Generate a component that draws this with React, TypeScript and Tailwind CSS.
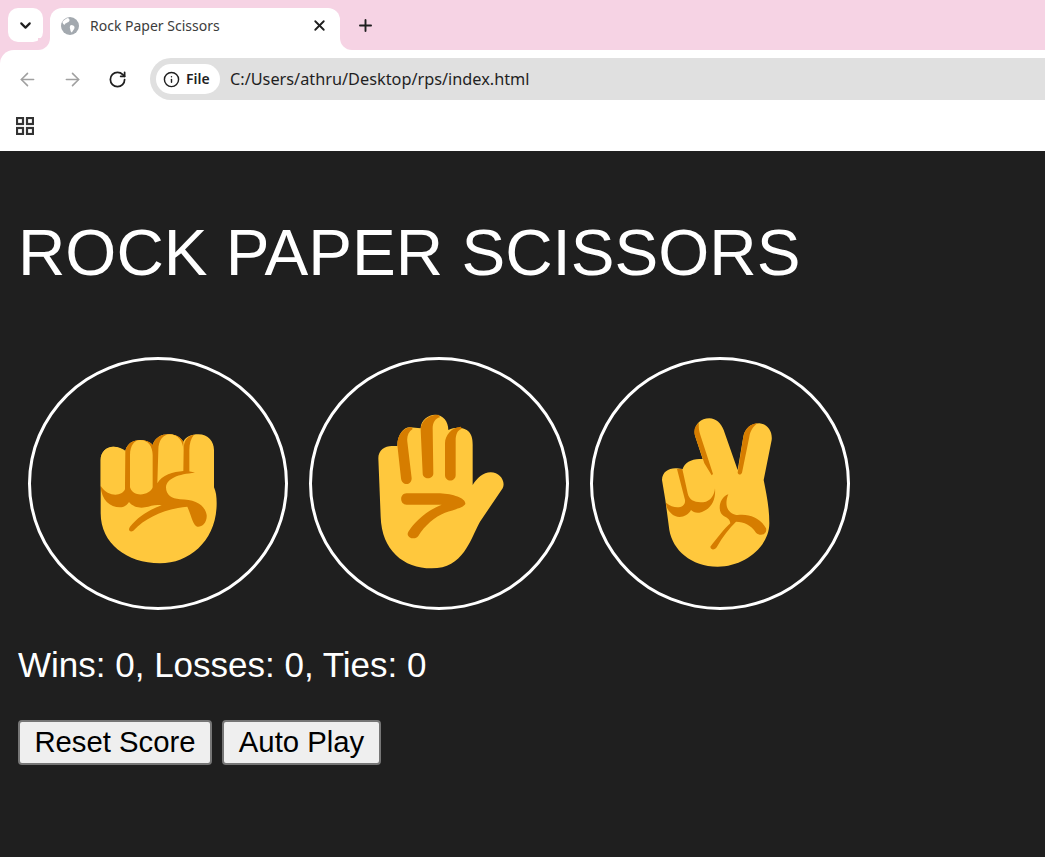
import { ArrowLeft, ArrowRight, ChevronDown, Info, Plus, RotateCw, X } from "lucide-react"

const YELLOW = "#FFC83D"
const DARK = "#D67D00"

function Rock() {
  return (
    <svg width="160" height="180" viewBox="0 0 480 540" className="ml-[4px] mt-[13px] shrink-0">
      <path
        fill={YELLOW}
        d="M62 180C62 155 80 140 100 140C115 140 128 145 136 152C142 130 160 120 180 120C195 120 210 125 218 135C225 112 245 103 265 103C285 103 300 110 310 125C318 110 335 103 355 103C385 103 402 125 402 150L402 262C408 275 410 290 410 310C410 420 330 490 240 490C140 490 62 430 62 340Z"
      />
      <path
        fill={DARK}
        d="M62 258C64 300 90 322 120 322C132 322 142 315 147 306C160 322 180 325 195 322C212 318 228 312 245 316C205 330 175 350 150 380C142 392 152 398 160 392C200 350 260 325 322 320C335 350 340 378 352 380C365 382 382 368 380 345C375 315 345 298 300 298C275 296 258 285 258 262C260 235 295 222 345 218C335 214 325 213 312 212L310 125C300 110 285 103 265 103C245 103 225 112 218 135C210 125 195 120 180 120C160 120 142 130 136 152L135 258Z"
      />
      <path fill={DARK} d="M312 214L312 135C315 118 325 107 342 104C333 115 328 130 328 150L328 216Z" />
      <path
        fill={YELLOW}
        d="M62 180C62 155 80 140 100 140C118 140 135 150 135 170L135 268C125 290 85 292 62 258ZM150 165C150 135 165 120 180 120C205 120 218 140 218 165L218 262C212 285 160 295 150 262ZM235 150C235 122 250 103 268 103C295 103 310 125 310 150L310 213C280 215 245 225 232 250Z"
      />
    </svg>
  )
}

function Paper() {
  return (
    <svg width="160" height="180" viewBox="0 0 480 540" className="ml-[2px] mt-[13px] shrink-0">
      <path
        fill={YELLOW}
        d="M55 175C55 150 75 138 95 138L112 138C112 105 130 82 150 82L182 85C182 60 205 44 225 44C250 44 265 65 265 90C285 80 305 82 320 90C335 100 338 115 338 135L338 255C350 235 370 217 392 217C420 217 438 245 428 265L360 365C330 420 310 505 215 505C130 505 65 450 62 350Z"
      />
      <path
        fill={DARK}
        d="M112 135C112 105 130 82 155 82L158 87C145 95 140 110 142 125L155 235C155 258 125 258 123 235ZM182 90C182 62 205 44 235 44L240 52C225 55 218 70 218 85L220 220C220 240 188 240 188 220ZM255 130C255 105 275 82 303 80L305 86C292 90 287 105 287 120L287 225C287 247 255 247 255 225ZM140 280L240 280C280 282 318 295 316 312C312 322 280 330 255 338C225 350 195 375 175 408C165 423 135 412 145 395C165 365 195 335 245 314L140 314C118 314 118 280 140 280Z"
      />
    </svg>
  )
}

function Scissors() {
  return (
    <svg width="160" height="180" viewBox="0 0 480 540" className="ml-[2px] mt-[13px] shrink-0">
      <path
        fill={YELLOW}
        d="M63 240C63 215 85 203 108 205L125 207C130 190 150 177 175 177L185 177L163 110C155 80 175 55 205 55C225 55 240 70 248 90L290 210L307 110C312 85 330 70 355 70C380 72 395 95 392 120L368 240C375 275 385 320 385 370C385 440 310 500 230 500C150 500 95 450 85 390L73 300Z"
      />
      <path
        fill={DARK}
        d="M174 68C160 78 156 95 163 110L190 190L212 226L216 222L178 105C174 92 172 80 174 68ZM290 218L307 110C312 85 330 70 350 70C335 80 328 95 325 110L303 218C300 225 292 225 290 218ZM108 207L124 207L140 280C145 305 170 310 195 305C210 300 220 285 222 265C225 300 210 330 175 338C165 340 155 335 150 330C140 350 110 360 90 340C80 330 75 320 75 308C100 330 135 325 132 300ZM262 283C240 290 230 320 240 340C250 355 265 350 268 370C250 385 225 420 208 440C210 452 222 450 228 440C245 410 265 385 285 365C310 365 330 375 345 398C360 412 380 400 375 385C360 355 325 340 290 345C270 345 245 325 262 283Z"
      />
    </svg>
  )
}

function Favicon() {
  return (
    <svg width="18" height="18" viewBox="0 0 18 18" className="shrink-0">
      <circle cx="9" cy="9" r="9" fill="#a3a9af" />
      <path fill="#fff" d="M7 1C9 2 9 4 7.500 5C6 6 4 6 3.500 8C2 7 1.500 6 1.500 5C3 3 5 1.500 7 1ZM10 8C12 8 14 9 13.500 11C13 13 11.500 13.500 11 15.500C9.500 15 9.500 13 9 11.500C8.500 10 9 8.500 10 8Z" />
    </svg>
  )
}

function AppsIcon() {
  return (
    <svg width="18" height="18" viewBox="0 0 18 18" fill="none" stroke="#333333" strokeWidth="2.2" className="shrink-0">
      <rect x="1" y="1" width="6" height="6" />
      <rect x="11" y="1" width="6" height="6" />
      <rect x="1" y="11" width="6" height="6" />
      <rect x="11" y="11" width="6" height="6" />
    </svg>
  )
}

function TabStrip() {
  return (
    <div className="flex h-[50px] items-start bg-[#f6d3e4] pl-[8px] pt-[8px]">
      <button className="flex h-[34px] w-[35px] items-center justify-center rounded-[10px] bg-white">
        <ChevronDown size={17} strokeWidth={3} className="text-[#1f1f1f]" />
      </button>
      <div className="relative ml-[7px] flex h-[42px] w-[290px] items-center rounded-t-[12px] bg-white pb-[7px] pl-[11px] pr-[12px]">
        <div className="absolute bottom-0 left-[-12px] h-[12px] w-[12px] bg-white">
          <div className="h-full w-full rounded-br-[12px] bg-[#f6d3e4]" />
        </div>
        <div className="absolute bottom-0 right-[-12px] h-[12px] w-[12px] bg-white">
          <div className="h-full w-full rounded-bl-[12px] bg-[#f6d3e4]" />
        </div>
        <Favicon />
        <span className="ml-[11px] flex-1 text-[14px] leading-none text-[#3c3c3c]">Rock Paper Scissors</span>
        <X size={17} strokeWidth={2.6} className="text-[#1f1f1f]" />
      </div>
      <Plus size={19} strokeWidth={2.4} className="ml-[16px] mt-[8px] text-[#1f1f1f]" />
    </div>
  )
}

function Toolbar() {
  return (
    <div className="bg-[#f6d3e4]">
      <div className="flex h-[58px] items-center rounded-tl-[14px] bg-white pl-[17px]">
        <ArrowLeft size={21} strokeWidth={1.8} className="text-[#a0a0a0]" />
        <ArrowRight size={21} strokeWidth={1.8} className="ml-[24px] text-[#a0a0a0]" />
        <RotateCw size={19} strokeWidth={2.2} className="ml-[25px] text-[#1f1f1f]" />
        <div className="ml-[23px] flex h-[42px] flex-1 items-center rounded-l-[21px] bg-[#e0e0e0] pl-[6px]">
          <div className="flex h-[30px] w-[64px] items-center rounded-[15px] bg-white pl-[7px]">
            <Info size={17} strokeWidth={2} className="text-[#1f1f1f]" />
            <span className="ml-[6px] text-[14px] font-semibold leading-none text-[#1f1f1f]">File</span>
          </div>
          <span className="ml-[10px] text-[16.3px] leading-none text-[#1f1f1f]">C:/Users/athru/Desktop/rps/index.html</span>
        </div>
      </div>
    </div>
  )
}

export default function App() {
  return (
    <div className="flex h-[857px] w-[1045px] flex-col overflow-hidden bg-[#1f1f1f] font-['Liberation_Sans',Arial,sans-serif]">
      <div className="font-['Noto_Sans',sans-serif]">
        <TabStrip />
        <Toolbar />
        <div className="flex h-[43px] items-center bg-white pb-[8px] pl-[16px]">
          <AppsIcon />
        </div>
      </div>

      <main className="pl-[18px]">
        <h1 className="mt-[62px] text-[65.6px] font-normal leading-[80px] text-white">ROCK PAPER SCISSORS</h1>
        <div className="ml-[10px] mt-[64px] flex gap-[21px]">
          {[Rock, Paper, Scissors].map((Hand, i) => (
            <button
              key={i}
              className="flex h-[253px] w-[260px] items-center justify-center rounded-[50%] border-[3px] border-white"
            >
              <Hand />
            </button>
          ))}
        </div>
        <p className="mt-[35px] text-[35px] leading-[40px] text-white">Wins: 0, Losses: 0, Ties: 0</p>
        <div className="mt-[35px] flex gap-[10px]">
          <button className="h-[45px] w-[194px] rounded-[4px] border-2 border-[#767676] bg-[#efefef] pb-[1px] text-[29.3px] leading-none text-black">
            Reset Score
          </button>
          <button className="h-[45px] w-[159px] rounded-[4px] border-2 border-[#767676] bg-[#efefef] pb-[1px] text-[29.3px] leading-none text-black">
            Auto Play
          </button>
        </div>
      </main>
    </div>
  )
}
